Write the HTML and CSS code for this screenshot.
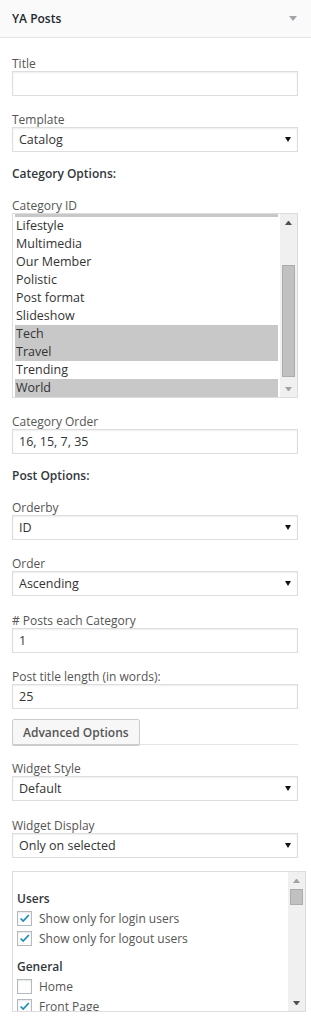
FILE: index.html
```html
<!DOCTYPE html>
<html lang="en">
<head>
    <meta charset="UTF-8">
    <meta name="viewport" content="width=device-width, initial-scale=1.0">
    <title>YA Posts</title>
    <link rel="stylesheet" href="styles.css">
</head>
<body>

    <!-- Widget header -->
    <div class="widget-top">
        <h3 class="widget-title">YA Posts</h3>
        <span class="toggle"></span>
    </div>

    <div class="widget-inside">
        <div class="field">
            <label>Title</label>
            <input class="input" type="text" value="">
        </div>

        <div class="field">
            <label>Template</label>
            <div class="select">
                <select class="input">
                    <option>Catalog</option>
                </select>
            </div>
        </div>

        <p class="section-title">Category Options:</p>

        <div class="field">
            <label>Category ID</label>
            <div class="listbox">
                <ul class="listbox-options">
                    <li class="selected"></li>
                    <li>Lifestyle</li>
                    <li>Multimedia</li>
                    <li>Our Member</li>
                    <li>Polistic</li>
                    <li>Post format</li>
                    <li>Slideshow</li>
                    <li class="selected">Tech</li>
                    <li class="selected">Travel</li>
                    <li>Trending</li>
                    <li class="selected">World</li>
                </ul>
                <div class="scrollbar">
                    <span class="arrow arrow-up"></span>
                    <span class="thumb thumb-list"></span>
                    <span class="arrow arrow-down dim"></span>
                </div>
            </div>
        </div>

        <div class="field">
            <label>Category Order</label>
            <input class="input" type="text" value="16, 15, 7, 35">
        </div>

        <p class="section-title">Post Options:</p>

        <div class="field">
            <label>Orderby</label>
            <div class="select">
                <select class="input">
                    <option>ID</option>
                </select>
            </div>
        </div>

        <div class="field field-loose">
            <label>Order</label>
            <div class="select">
                <select class="input">
                    <option>Ascending</option>
                </select>
            </div>
        </div>

        <div class="field">
            <label># Posts each Category</label>
            <input class="input" type="text" value="1">
        </div>

        <div class="field field-tight">
            <label>Post title length (in words):</label>
            <input class="input" type="text" value="25">
        </div>

        <div class="advanced-row">
            <button class="button">Advanced Options</button>
        </div>

        <div class="field field-loose">
            <label>Widget Style</label>
            <div class="select">
                <select class="input">
                    <option>Default</option>
                </select>
            </div>
        </div>

        <div class="field">
            <label>Widget Display</label>
            <div class="select">
                <select class="input">
                    <option>Only on selected</option>
                </select>
            </div>
        </div>

        <!-- Display rules box -->
        <div class="display-box">
            <div class="display-list">
                <p class="group-title">Users</p>
                <div class="check"><span class="box"><svg viewBox="0 0 15 15"><path d="M3 7.5 L6 10.5 L12.5 3.5"/></svg></span>Show only for login users</div>
                <div class="check"><span class="box"><svg viewBox="0 0 15 15"><path d="M3 7.5 L6 10.5 L12.5 3.5"/></svg></span>Show only for logout users</div>

                <p class="group-title group-gap">General</p>
                <div class="check"><span class="box"></span>Home</div>
                <div class="check"><span class="box"><svg viewBox="0 0 15 15"><path d="M3 7.5 L6 10.5 L12.5 3.5"/></svg></span>Front Page</div>
            </div>
            <div class="scrollbar">
                <span class="arrow arrow-up dim"></span>
                <span class="thumb thumb-box"></span>
                <span class="arrow arrow-down"></span>
            </div>
        </div>
    </div>

</body>
</html>
```

FILE: styles.css
```css
body {
    margin: 0;
    font-family: "Open Sans", "Liberation Sans", sans-serif;
    font-size: 12px;
    color: #555;
    background: #fff;
}

/* Header */
.widget-top {
    display: flex;
    justify-content: space-between;
    align-items: center;
    height: 37px;
    padding: 0 12px;
    background: #fafafa;
    border-bottom: 1px solid #e5e5e5;
}

.widget-title {
    margin: 0;
    font-size: 12px;
    font-weight: 600;
    color: #23282d;
}

.toggle {
    width: 0;
    height: 0;
    margin-right: 2px;
    border-left: 4px solid transparent;
    border-right: 4px solid transparent;
    border-top: 5px solid #a0a5aa;
}

/* Form */
.widget-inside {
    padding: 15px 13px 0 12px;
}

.field {
    margin-bottom: 13px;
}

.field-tight {
    margin-bottom: 10px;
}

.field-loose {
    margin-bottom: 14px;
}

.field label {
    display: block;
    padding-top: 4px;
    line-height: 14px;
}

.input {
    display: block;
    box-sizing: border-box;
    width: 100%;
    height: 25px;
    margin: 0;
    padding: 0 6px;
    border: 1px solid #ddd;
    border-radius: 0;
    background: #fff;
    box-shadow: inset 0 1px 2px rgba(0, 0, 0, 0.07);
    font-family: inherit;
    font-size: 12.5px;
    color: #333;
    outline: none;
}

select.input {
    -webkit-appearance: none;
    appearance: none;
}

.select {
    position: relative;
}

.select::after {
    content: "";
    position: absolute;
    right: 7px;
    top: 10px;
    border-left: 3px solid transparent;
    border-right: 3px solid transparent;
    border-top: 5px solid #111;
    pointer-events: none;
}

.section-title {
    margin: 0 0 12px;
    line-height: 18px;
    font-weight: 600;
    color: #32373c;
}

/* Multi select list */
.listbox {
    display: flex;
    box-sizing: border-box;
    height: 185px;
    border: 1px solid #ddd;
    overflow: hidden;
}

.listbox-options {
    flex: 1;
    margin: -15px 0 0;
    padding: 0 2px;
    list-style: none;
    font-size: 12.5px;
    color: #333;
}

.listbox-options li {
    height: 18px;
    padding: 0 1px;
    line-height: 18px;
}

.listbox-options li.selected {
    background: #c8c8c8;
}

.scrollbar {
    display: flex;
    flex-direction: column;
    align-items: center;
    width: 17px;
    flex-shrink: 0;
    background: #f0f0f0;
}

.arrow {
    display: flex;
    justify-content: center;
    align-items: center;
    width: 17px;
    height: 17px;
}

.arrow::before {
    content: "";
    width: 1px;
    height: 0;
    border-left: 3px solid transparent;
    border-right: 3px solid transparent;
}

.arrow-up::before {
    border-bottom: 4px solid #505050;
}

.arrow-down {
    margin-top: auto;
}

.arrow-down::before {
    border-top: 4px solid #505050;
}

.arrow-up.dim::before {
    border-bottom-color: #a3a3a3;
}

.arrow-down.dim::before {
    border-top-color: #a3a3a3;
}

.thumb {
    box-sizing: border-box;
    width: 13px;
    background: #c1c1c1;
    border: 1px solid #adadad;
}

.thumb-list {
    height: 112px;
    margin-top: 34px;
}

.thumb-box {
    height: 16px;
}

/* Advanced options button */
.advanced-row {
    display: flex;
    align-items: flex-end;
    margin-bottom: 13px;
}

.advanced-row::after {
    content: "";
    flex: 1;
    border-bottom: 1px solid #e5e5e5;
}

.button {
    height: 26px;
    padding: 0 10px;
    border: 1px solid #ccc;
    border-radius: 2px;
    background: #f7f7f7;
    box-shadow: 0 1px 0 #ccc;
    font-family: inherit;
    font-size: 12px;
    font-weight: 600;
    color: #555;
}

/* Display rules */
.display-box {
    display: flex;
    box-sizing: border-box;
    height: 141px;
    margin-right: -8px;
    border: 1px solid #ddd;
    overflow: hidden;
}

.display-list {
    flex: 1;
    padding: 18px 0 0 4px;
}

.group-title {
    margin: 0;
    line-height: 18px;
    font-weight: 600;
    color: #32373c;
}

.group-gap {
    margin-top: 10px;
}

.check {
    display: flex;
    align-items: center;
    gap: 7px;
    height: 20px;
}

.box {
    box-sizing: border-box;
    width: 15px;
    height: 15px;
    border: 1px solid #b4b9be;
    background: #fff;
    box-shadow: inset 0 1px 2px rgba(0, 0, 0, 0.1);
}

.box svg {
    display: block;
    width: 13px;
    height: 13px;
    fill: none;
    stroke: #1e8cbe;
    stroke-width: 2;
}
```
